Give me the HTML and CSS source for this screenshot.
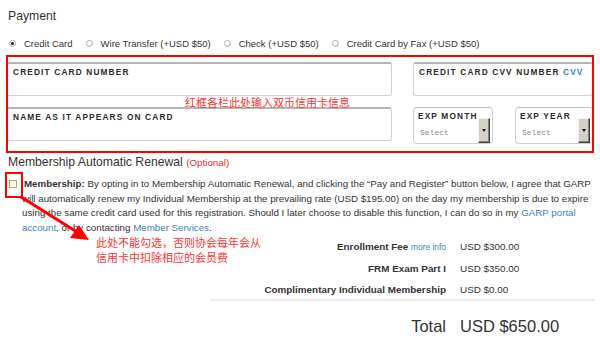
FILE: index.html
```html
<!DOCTYPE html>
<html>
<head>
<meta charset="utf-8">
<link rel="stylesheet" href="styles.css">
</head>
<body>
<div class="page">
  <h2 class="title">Payment</h2>
  <div class="methods">
    <label class="opt"><span class="radio on"></span>Credit Card</label>
    <label class="opt"><span class="radio"></span>Wire Transfer (+USD $50)</label>
    <label class="opt"><span class="radio"></span>Check (+USD $50)</label>
    <label class="opt"><span class="radio"></span>Credit Card by Fax (+USD $50)</label>
  </div>
  <div class="fields">
    <div class="frow">
      <div class="field wide"><span class="flabel">CREDIT CARD NUMBER</span></div>
      <div class="field cvv"><span class="flabel">CREDIT CARD CVV NUMBER <a class="link">CVV</a></span></div>
    </div>
    <div class="frow">
      <div class="field wide"><span class="flabel">NAME AS IT APPEARS ON CARD</span></div>
      <div class="field sel month">
        <span class="flabel">EXP MONTH</span>
        <span class="seltext">Select</span>
        <span class="selbtn"><span class="tri"></span></span>
      </div>
      <div class="field sel year">
        <span class="flabel">EXP YEAR</span>
        <span class="seltext">Select</span>
        <span class="selbtn"><span class="tri"></span></span>
      </div>
    </div>
  </div>
  <h3 class="renew">Membership Automatic Renewal <span class="optional">(Optional)</span></h3>
  <div class="agree">
    <span class="check"></span>
    <p class="agree-text"><b>Membership:</b> By opting in to Membership Automatic Renewal, and clicking the “Pay and Register” button below, I agree that GARP will automatically renew my Individual Membership at the prevailing rate (USD $195.00) on the day my membership is due to expire using the same credit card used for this registration. Should I later choose to disable this function, I can do so in my <a class="link">GARP portal account</a>, or by contacting <a class="link">Member Services</a>.</p>
  </div>
  <div class="fees">
    <div class="fee-grid">
      <div class="fl">Enrollment Fee <a class="link more">more info</a></div>
      <div class="fv">USD $300.00</div>
      <div class="fl">FRM Exam Part I</div>
      <div class="fv">USD $350.00</div>
      <div class="fl">Complimentary Individual Membership</div>
      <div class="fv">USD $0.00</div>
    </div>
    <div class="total">
      <div class="tl">Total</div>
      <div class="tv">USD $650.00</div>
    </div>
  </div>

  <div class="mark mark-fields"></div>
  <div class="note note-fields">红框各栏此处输入双币信用卡信息</div>
  <div class="mark mark-check"></div>
  <svg class="arrow" width="110" height="70" viewBox="0 0 110 70">
    <line x1="21" y1="17" x2="77" y2="52" stroke="#f00" stroke-width="3.2"/>
    <polygon points="89,60 70,58 79,45" fill="#f00"/>
  </svg>
  <div class="note note-check">此处不能勾选，否则协会每年会从<br>信用卡中扣除相应的会员费</div>
</div>
</body>
</html>
```
FILE: styles.css
```css
* { box-sizing: border-box; }
html, body { margin: 0; padding: 0; background: #fff; }
body {
  font-family: "Liberation Sans", Arial, sans-serif;
  color: #333;
  font-size: 10px;
}
.page {
  position: relative;
  width: 600px;
  height: 342px;
  padding-left: 8px;
  overflow: hidden;
}
.title {
  margin: 8px 0 0;
  font-size: 12.2px;
  font-weight: normal;
  line-height: 16px;
  color: #333;
}
.methods {
  display: flex;
  margin-top: 14px;
  line-height: 12px;
  font-size: 9.5px;
}
.opt { display: flex; align-items: center; margin-right: 12px; }
.radio {
  width: 7px; height: 7px;
  border-radius: 50%;
  border: 1px solid #b0b0b0;
  background: radial-gradient(circle at 40% 35%, #fff 0, #fff 40%, #dcdcdc 100%);
  margin: -2px 8px 0 1px;
  display: flex; align-items: center; justify-content: center;
}
.radio.on::after {
  content: "";
  width: 3px; height: 3px; border-radius: 50%;
  background: #222;
}
.fields {
  margin: 12px 0 0 -2px;
  width: 587px;
  display: flex;
  flex-direction: column;
  gap: 11px;
}
.frow { display: flex; align-items: flex-start; }
.field {
  background: #fff;
  border: 1px solid #d2d2d2;
  border-top: 2px solid #b4b4b4;
  border-radius: 3px;
  padding: 3px 0 0 6px;
}
.flabel {
  display: block;
  font-size: 8.3px;
  font-weight: bold;
  letter-spacing: 1.15px;
  line-height: 10px;
  color: #2a2a2a;
  white-space: nowrap;
}
.wide { width: 386px; height: 34px; }
.cvv { width: 180px; height: 34px; margin-left: 21px; padding-left: 5px; }
.sel {
  height: 37px;
  border: 1px solid #cfcfcf;
  border-top: 1px solid #bdbdbd;
  border-radius: 4px;
  padding: 3px 2px 0 4px;
  display: grid;
  grid-template-columns: 1fr 12px;
  grid-template-rows: 11px 1fr;
}
.sel .flabel { grid-column: 1; grid-row: 1; overflow: visible; }
.month { width: 80px; margin-left: 21px; }
.year { width: 78px; margin-left: 22px; }
.seltext {
  grid-column: 1; grid-row: 2;
  align-self: center;
  font-family: "Liberation Mono", monospace;
  font-size: 8px;
  color: #8a8a8a;
  padding-left: 2px;
  margin-top: -1px;
}
.selbtn {
  grid-column: 2; grid-row: 1 / 3;
  margin-top: 7px;
  background: #d4d0c8;
  border-top: 1px solid #f4f4f4;
  border-left: 1px solid #f4f4f4;
  border-right: 1px solid #404040;
  border-bottom: 1px solid #404040;
  box-shadow: inset -1px -1px 0 #808080;
  display: flex; align-items: center; justify-content: center;
  height: 25px;
}
.tri {
  width: 0; height: 0;
  border-left: 2.5px solid transparent;
  border-right: 2.5px solid transparent;
  border-top: 3px solid #000;
}
.renew {
  margin: 10px 0 0;
  font-size: 12.2px;
  font-weight: normal;
  line-height: 16px;
  color: #333;
}
.optional { color: #e0302a; font-size: 9.8px; }
.agree { display: flex; align-items: flex-start; margin-top: 6px; }
.check {
  flex: none;
  width: 8px; height: 8px;
  margin: 3px 5px 0 1px;
  border: 1px solid #c9a25e;
  background: linear-gradient(#f4f4f4, #fff);
}
.agree-text {
  margin: 0;
  width: 572px;
  font-size: 9.75px;
  line-height: 14.5px;
  text-indent: 2px;
}
.agree-text b { font-weight: bold; }
.link { color: #3c7fc4; text-decoration: none; }
.fees { margin-left: 202px; width: 385px; }
.fee-grid {
  display: grid;
  grid-template-columns: 236px 1fr;
  column-gap: 14px;
  grid-template-rows: 22px 22px 20px;
  align-items: center;
  border-bottom: 2px solid #ececec;
}
.fl { text-align: right; font-weight: bold; font-size: 9.9px; white-space: nowrap; }
.fv { font-size: 9.9px; }
.more { font-weight: normal; font-size: 8.4px; }
.total {
  display: grid;
  grid-template-columns: 236px 1fr;
  column-gap: 14px;
  margin-top: 15px;
  line-height: 20px;
  font-size: 16.5px;
}
.tl { text-align: right; }

.mark { position: absolute; border: 2px solid #f00; }
.mark-fields { left: 6px; top: 55px; width: 588px; height: 98px; }
.mark-check { left: 5px; top: 172px; width: 18px; height: 26px; }
.note {
  position: absolute;
  color: #f33;
  font-family: "Noto Sans CJK SC", sans-serif;
  font-size: 11px;
  white-space: nowrap;
}
.note-fields { left: 185px; top: 95px; line-height: 14px; }
.note-check { left: 96px; top: 235px; line-height: 15px; }
.arrow { position: absolute; left: 0; top: 180px; }
```
